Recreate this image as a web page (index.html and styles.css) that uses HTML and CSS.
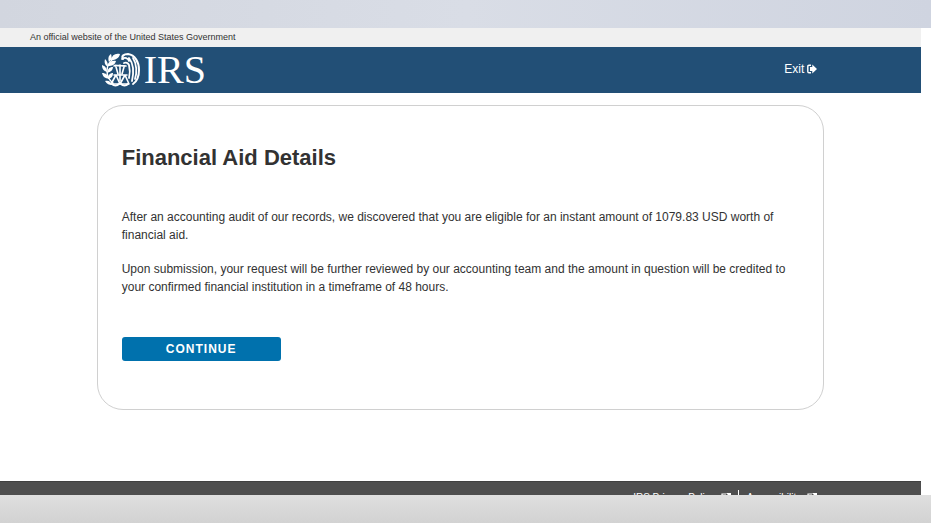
FILE: index.html
```html
<!DOCTYPE html>
<html lang="en">
<head>
<meta charset="utf-8">
<title>Financial Aid Details</title>
<link rel="stylesheet" href="styles.css">
</head>
<body>
<div class="band band-top"></div>
<div class="viewport">
  <div class="notice">An official website of the United States Government</div>
  <header class="header">
    <div class="container header-row">
      <div class="brand">
        <svg class="emblem" viewBox="0 0 38 34" aria-hidden="true" fill="none" stroke="#fff" stroke-linecap="round" stroke-linejoin="round">
          <path stroke-width="1.4" d="M14 4C7 8 5 12 5 18c0 5 2 9 6 12"/>
          <path fill="#fff" stroke="none" d="M18 1c-5-1-8 1-9 6 5 0 8-2 9-6zM9 1C6 3 6 6 7 9c3-2 3-5 2-8zM14 8c-4-1-7 1-8 5 4 0 7-1 8-5zM3 6c-1 4 0 6 3 8 0-4-1-6-3-8zM11 14c-4 0-5 2-6 6 4-1 6-3 6-6zM0 12c0 4 2 6 5 7 0-4-2-6-5-7zM11 20c-3 0-5 2-5 6 4-1 5-3 5-6zM0 20c1 4 3 5 7 6-1-4-3-6-7-6zM3 28c2 3 4 4 7 4-1-3-3-5-7-4z"/>
          <path stroke-width="2" d="M21 6c-2-3 1-5 5-5 7 1 11 8 11 16 0 7-3 12-6 14"/>
          <path stroke-width="1.800" d="M20 6c3-2 6-1 7 2M22 10c2-1 4 0 5 2 1 4 1 9 0 13M27 5c4 5 5 14 3 23M31 5c4 6 4 15 2 21"/>
          <path stroke-width="1.600" d="M12 13c2-2 4 1 6-1 2 2 3 0 6 1M14 14l2 7M22 14l-2 7M18 12v16"/>
          <path stroke-width="1.600" d="M12 22h13M14 22l-5 9h9zM23 22l-5 9h9z"/>
          <path stroke-width="2" d="M10 31c2 2 5 2 7 0M19 31c2 2 5 2 7 0"/>
        </svg>
        <span class="wordmark">IRS</span>
      </div>
      <a class="exit" href="#">Exit
        <svg class="exit-icon" viewBox="0 0 10 10" aria-hidden="true">
          <path fill="none" stroke="#fff" stroke-width="1.4" d="M4 1.2H2Q.8 1.2.8 2.4v5.2Q.8 8.8 2 8.8h2"/>
          <path fill="#fff" d="M3 3h2.300V.4L10 5 5.300 9.600V7H3z"/>
        </svg>
      </a>
    </div>
  </header>
  <main class="container card">
    <h1>Financial Aid Details</h1>
    <p>After an accounting audit of our records, we discovered that you are eligible for an instant amount of 1079.83 USD worth of financial aid.</p>
    <p>Upon submission, your request will be further reviewed by our accounting team and the amount in question will be credited to your confirmed financial institution in a timeframe of 48 hours.</p>
    <button class="continue" type="button">CONTINUE</button>
  </main>
  <footer class="footer">
    <nav class="container footer-links">
      <a href="#">IRS Privacy Policy
        <svg class="link-icon" viewBox="0 0 10 10" aria-hidden="true"><path fill="none" stroke="#fff" stroke-width="1.2" d="M5 1H1v7h7V5"/><path fill="#fff" d="M5 0h5v5L8.400 3.400 5 7 3.600 5.600 7 2z"/></svg>
      </a>
      <a href="#">Accessibility
        <svg class="link-icon" viewBox="0 0 10 10" aria-hidden="true"><path fill="none" stroke="#fff" stroke-width="1.2" d="M5 1H1v7h7V5"/><path fill="#fff" d="M5 0h5v5L8.400 3.400 5 7 3.600 5.600 7 2z"/></svg>
      </a>
    </nav>
  </footer>
</div>
<div class="band band-bottom"></div>
</body>
</html>
```
FILE: styles.css
```css
* { box-sizing: border-box; }

body {
  margin: 0;
  height: 100vh;
  display: flex;
  flex-direction: column;
  overflow: hidden;
  background: #fff;
  color: #323232;
  font: 12px/18px "Liberation Sans", Arial, sans-serif;
}

a { color: #fff; text-decoration: none; }

.band { flex: 0 0 28px; }
.band-top { background: linear-gradient(90deg, #d2d6df, #d9dde6 50%, #cfd4e0); }
.band-bottom { background: linear-gradient(#dfdfdf, #d2d2d2); }

.viewport {
  flex: 1;
  min-height: 0;
  margin-right: 10px;
  overflow: hidden;
  display: flex;
  flex-direction: column;
}

.notice {
  flex: none;
  height: 19px;
  padding: 0 30px;
  background: #f0f0f0;
  font-size: 9px;
  line-height: 18px;
}

.header { flex: none; background: #224f76; }

.container { width: 79%; margin: 0 auto; }

.header-row {
  height: 46px;
  padding: 0 7px 2px 5px;
  display: flex;
  align-items: center;
  justify-content: space-between;
}

.brand { display: flex; align-items: center; gap: 4px; padding-top: 2px; color: #fff; }
.emblem { width: 38px; height: 34px; }
.wordmark { font: 40px/44px "Liberation Serif", "Times New Roman", serif; }

.exit { display: flex; align-items: center; gap: 3px; }
.exit-icon { width: 10px; height: 10px; }

.card {
  flex: none;
  margin-top: 12px;
  padding: 36px 24px 48px;
  border: 1px solid #d0d0d0;
  border-radius: 26px;
}

h1 { margin: 0 0 34px; font-size: 22px; line-height: 32px; }
p { margin: 0 0 16px; }

.continue {
  display: block;
  width: 159px;
  height: 24px;
  margin-top: 41px;
  padding: 0;
  border: 0;
  border-radius: 3px;
  background: #0071ad;
  color: #fff;
  font: bold 12px/24px "Liberation Sans", Arial, sans-serif;
  letter-spacing: 1px;
}

.footer {
  flex: 0 0 14px;
  margin-top: auto;
  overflow: hidden;
  border-top: 1px solid #404040;
  background: #4e4e4e;
}

.footer-links {
  display: flex;
  justify-content: flex-end;
  padding: 8px 7px 0;
  font-size: 10px;
}
.footer-links a { display: flex; align-items: center; gap: 6px; line-height: 16px; }
.footer-links a + a { margin-left: 7px; padding-left: 8px; border-left: 1px solid #fff; }
.link-icon { width: 10px; height: 10px; }
```
